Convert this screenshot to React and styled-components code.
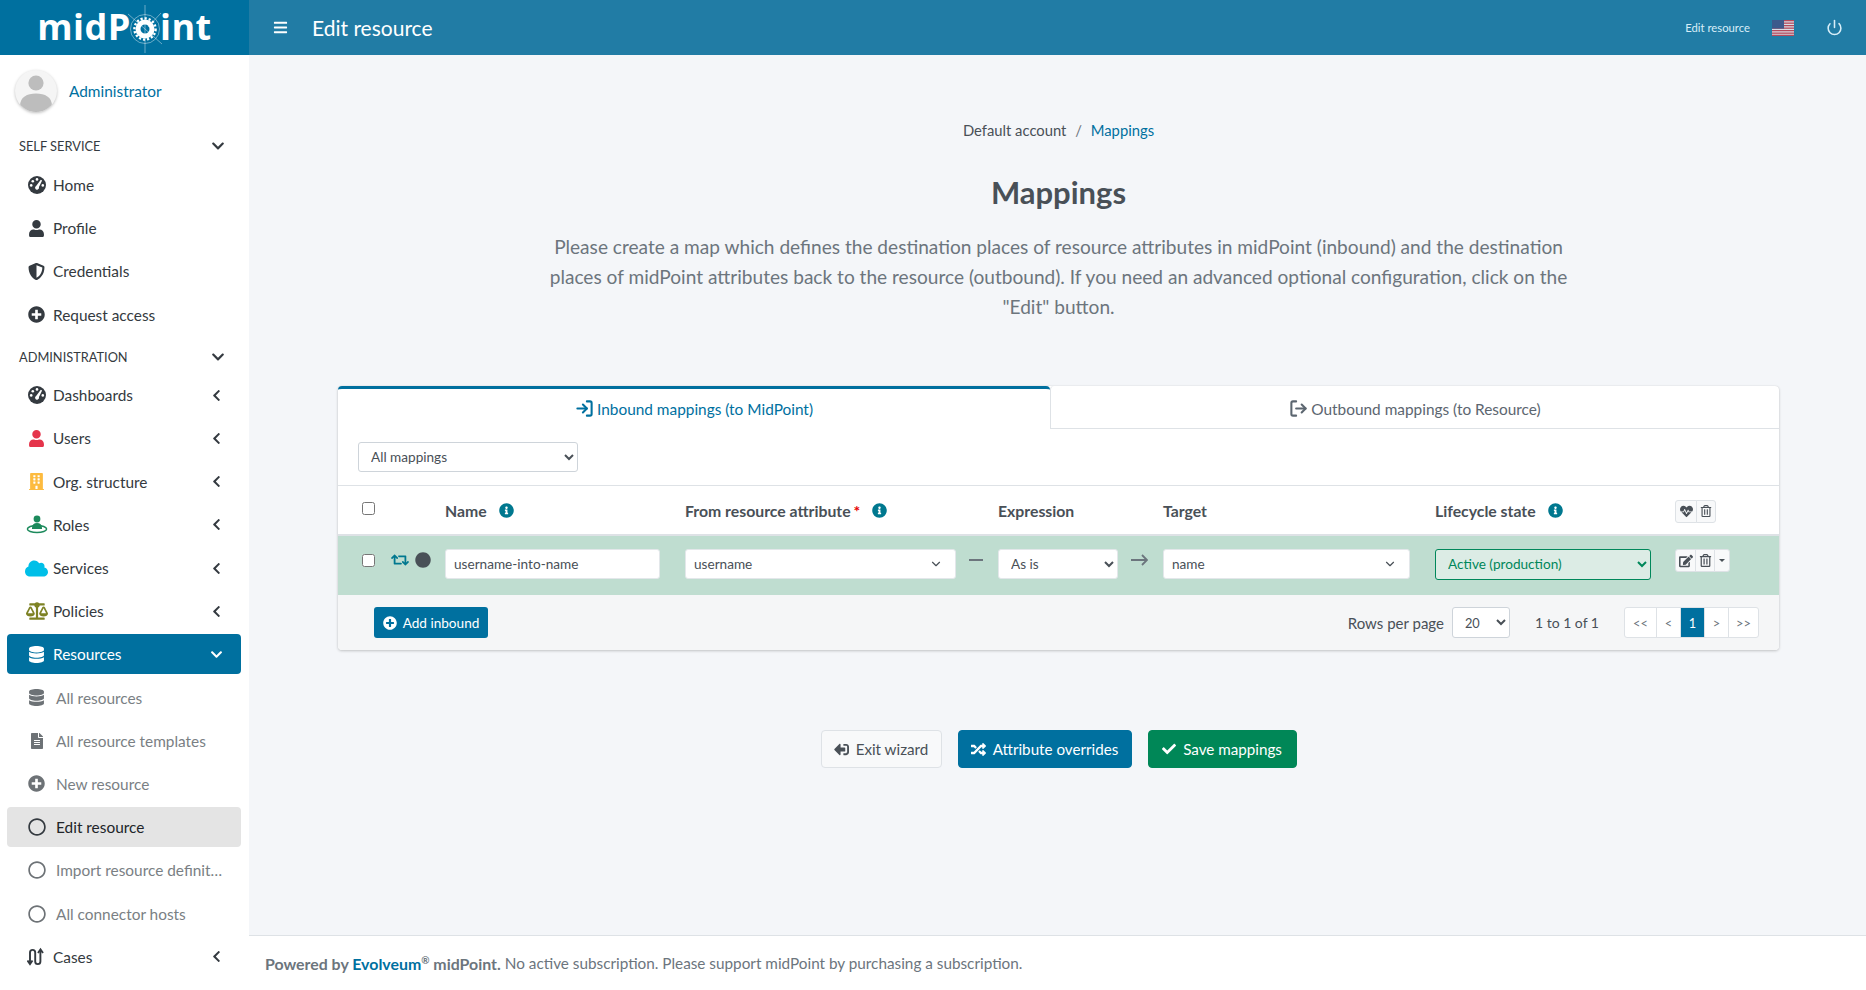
import styled, { createGlobalStyle } from "styled-components";
import {
  FaBalanceScale,
  FaBars,
  FaBuilding,
  FaCheck,
  FaChevronDown,
  FaChevronLeft,
  FaCircle,
  FaCloud,
  FaDatabase,
  FaEdit,
  FaFileAlt,
  FaHeartbeat,
  FaInfoCircle,
  FaPlusCircle,
  FaRandom,
  FaRegCircle,
  FaRegTrashAlt,
  FaRetweet,
  FaShieldAlt,
  FaSignOutAlt,
  FaUser,
} from "react-icons/fa";
import { ChevronDown, LogIn, LogOut, Power } from "lucide-react";

const FONT = `"Lato", "Noto Sans", sans-serif`;
const BLUE = "#00709f";

const GlobalStyle = createGlobalStyle`
  html, body {
    margin: 0;
    height: 100%;
    overflow: hidden;
    background: #f4f6f9;
    font-family: ${FONT};
    font-size: 15.4px;
    color: #495057;
  }
  * { box-sizing: border-box; }
  select, input { font-family: ${FONT}; }
`;

const GaugeIcon = () => (
  <svg width="18" height="18" viewBox="0 0 18 18">
    <circle cx="9" cy="9" r="9" fill="#343a40" />
    <g fill="#fff">
      <circle cx="9" cy="3.4" r="1.300" />
      <circle cx="4.800" cy="5.200" r="1.300" />
      <circle cx="3.200" cy="9.400" r="1.300" />
      <circle cx="14.800" cy="9.400" r="1.300" />
      <path d="M12.800 3.800l1.300.6-3.100 6.700a2 2 0 1 1-2.900-1.200z" />
    </g>
  </svg>
);

const RoleIcon = () => (
  <svg width="22" height="20" viewBox="0 0 22 20" fill="#1c8a5c">
    <circle cx="11" cy="4" r="3.400" />
    <path d="M6 13c0-3.400 2-5 5-5s5 1.600 5 5v1H6z" />
    <ellipse cx="11" cy="14" rx="9.600" ry="3.600" fill="none" stroke="#1c8a5c" strokeWidth="1.500" />
  </svg>
);

const CasesIcon = () => (
  <svg width="20" height="20" viewBox="0 0 20 20" fill="none" stroke="#343a40" strokeWidth="1.900">
    <path d="M3 17V5.500a2.600 2.600 0 0 1 5.200 0v9a2.600 2.600 0 0 0 5.200 0V3" />
    <path d="M0.500 13.500 3 17l2.500-3.500" />
    <path d="M11 6l2.500-3.500L16 6" />
  </svg>
);

const UsFlag = () => (
  <svg width="22" height="16" viewBox="0 0 22 16">
    <rect width="22" height="16" fill="#d8dde6" />
    {[0, 2.5, 5, 7.5, 10, 12.5].map((y) => (
      <rect key={y} y={y} width="22" height="1.300" fill="#b5495b" />
    ))}
    <rect y="14.700" width="22" height="1.300" fill="#b5495b" />
    <rect width="12" height="8.600" fill="#3c5a8c" />
  </svg>
);

const Avatar = () => (
  <AvatarCircle>
    <svg width="42" height="42" viewBox="0 0 42 42" fill="#bdbdbd">
      <circle cx="21" cy="13" r="7.600" />
      <path d="M5 36c0-9 7-12.500 16-12.500S37 27 37 36c-4 4-10 6-16 6S9 40 5 36z" />
    </svg>
  </AvatarCircle>
);

const LogoGear = () => (
  <GearSvg width="46" height="48" viewBox="0 0 46 48" fill="none" stroke="#fff">
    <path d="M23 0v48M6 9l34 30M39 8L26 22" strokeWidth="0.700" opacity="0.6" />
    <circle cx="23" cy="24" r="14.500" strokeWidth="0.700" opacity="0.6" />
    <circle cx="23" cy="24" r="10.600" strokeWidth="2.400" strokeDasharray="2.200 1.900" />
    <circle cx="23" cy="24" r="7" strokeWidth="5" />
  </GearSvg>
);

const selfService = [
  { label: "Home", icon: <GaugeIcon /> },
  { label: "Profile", icon: <FaUser size={17} color="#343a40" /> },
  { label: "Credentials", icon: <FaShieldAlt size={17} color="#343a40" /> },
  { label: "Request access", icon: <FaPlusCircle size={17} color="#343a40" /> },
];

const administration = [
  { label: "Dashboards", icon: <GaugeIcon />, more: true },
  { label: "Users", icon: <FaUser size={17} color="#e5344b" />, more: true },
  { label: "Org. structure", icon: <FaBuilding size={17} color="#fdbb3f" />, more: true },
  { label: "Roles", icon: <RoleIcon />, more: true },
  { label: "Services", icon: <FaCloud size={23} color="#00bfe8" />, more: true },
  { label: "Policies", icon: <FaBalanceScale size={22} color="#7d8224" />, more: true },
];

const resources = [
  { label: "All resources", icon: <FaDatabase size={17} color="#6d7276" /> },
  { label: "All resource templates", icon: <FaFileAlt size={16} color="#6d7276" /> },
  { label: "New resource", icon: <FaPlusCircle size={17} color="#6d7276" /> },
  { label: "Edit resource", icon: <FaRegCircle size={18} color="#343a40" />, selected: true },
  { label: "Import resource definit…", icon: <FaRegCircle size={18} color="#6d7276" /> },
  { label: "All connector hosts", icon: <FaRegCircle size={18} color="#6d7276" /> },
];

const NavItem = ({ item, sub }) => (
  <NavRow $sub={sub} $selected={item.selected}>
    <NavIcon>{item.icon}</NavIcon>
    <NavLabel $sub={sub}>{item.label}</NavLabel>
    {item.more && <FaChevronLeft size={13} color="#343a40" />}
  </NavRow>
);

const InfoIcon = () => (
  <InfoMark>
    <FaInfoCircle size={15} />
  </InfoMark>
);

const App = () => {
  return (
    <Page>
      <GlobalStyle />
      <TopBar>
        <Logo>
          <span>midP</span>
          <LogoGear />
          <span>int</span>
        </Logo>
        <TopBarBody>
          <FaBars size={15} />
          <TopTitle>Edit resource</TopTitle>
          <TopRight>
            <TopCrumb>Edit resource</TopCrumb>
            <UsFlag />
            <Power size={17} strokeWidth={2.2} />
          </TopRight>
        </TopBarBody>
      </TopBar>
      <Body>
        <Sidebar>
          <UserPanel>
            <Avatar />
            <UserName>Administrator</UserName>
          </UserPanel>
          <SectionLabel>
            SELF SERVICE
            <FaChevronDown size={14} color="#343a40" />
          </SectionLabel>
          {selfService.map((item) => (
            <NavItem key={item.label} item={item} />
          ))}
          <SectionLabel>
            ADMINISTRATION
            <FaChevronDown size={14} color="#343a40" />
          </SectionLabel>
          {administration.map((item) => (
            <NavItem key={item.label} item={item} />
          ))}
          <NavRow $active>
            <NavIcon>
              <FaDatabase size={17} />
            </NavIcon>
            <NavLabel>Resources</NavLabel>
            <FaChevronDown size={13} />
          </NavRow>
          {resources.map((item) => (
            <NavItem key={item.label} item={item} sub />
          ))}
          <NavItem item={{ label: "Cases", icon: <CasesIcon />, more: true }} />
        </Sidebar>
        <Main>
          <Content>
            <Breadcrumb>
              Default account <Slash>/</Slash> <CrumbLink>Mappings</CrumbLink>
            </Breadcrumb>
            <Title>Mappings</Title>
            <Lead>
              Please create a map which defines the destination places of resource attributes in
              midPoint (inbound) and the destination places of midPoint attributes back to the
              resource (outbound). If you need an advanced optional configuration, click on the
              "Edit" button.
            </Lead>
            <Card>
              <Tabs>
                <Tab $active>
                  <LogIn size={19} strokeWidth={2.6} />
                  Inbound mappings (to MidPoint)
                </Tab>
                <Tab>
                  <LogOut size={19} strokeWidth={2.6} />
                  Outbound mappings (to Resource)
                </Tab>
              </Tabs>
              <FilterRow>
                <FilterSelect defaultValue="all">
                  <option value="all">All mappings</option>
                </FilterSelect>
              </FilterRow>
              <HeadRow>
                <CheckCell>
                  <Check type="checkbox" />
                </CheckCell>
                <HeadCell>
                  Name <InfoIcon />
                </HeadCell>
                <HeadCell>
                  From resource attribute<Required>*</Required> <InfoIcon />
                </HeadCell>
                <HeadCell>Expression</HeadCell>
                <HeadCell>Target</HeadCell>
                <HeadCell>
                  Lifecycle state <InfoIcon />
                </HeadCell>
                <div>
                  <ActionGroup>
                    <ActionButton $w={22}>
                      <FaHeartbeat size={13} />
                    </ActionButton>
                    <ActionButton $w={20}>
                      <FaRegTrashAlt size={12} />
                    </ActionButton>
                  </ActionGroup>
                </div>
              </HeadRow>
              <DataRow>
                <CheckCell $raised>
                  <Check type="checkbox" />
                  <FaRetweet size={18} color="#00788f" />
                  <FaCircle size={16} color="#495057" />
                </CheckCell>
                <TextField readOnly value="username-into-name" $width={215} />
                <DashedCell>
                  <ComboBox $width={271}>
                    username
                    <ChevronDown size={14} />
                  </ComboBox>
                  <Dash />
                </DashedCell>
                <DashedCell>
                  <RowSelect $width={120} defaultValue="asis">
                    <option value="asis">As is</option>
                  </RowSelect>
                  <RowArrow>
                    <svg width="17" height="12" viewBox="0 0 17 12" fill="none" stroke="#6c757d" strokeWidth="1.800">
                      <path d="M0 6h16M11 1l5 5-5 5" />
                    </svg>
                  </RowArrow>
                </DashedCell>
                <ComboBox $width={247}>
                  name
                  <ChevronDown size={14} />
                </ComboBox>
                <LifecycleSelect defaultValue="active">
                  <option value="active">Active (production)</option>
                </LifecycleSelect>
                <div>
                  <ActionGroup $raised>
                    <ActionButton $w={21}>
                      <FaEdit size={14} />
                    </ActionButton>
                    <ActionButton $w={20}>
                      <FaRegTrashAlt size={13} />
                    </ActionButton>
                    <CaretButton $w={16} />
                  </ActionGroup>
                </div>
              </DataRow>
              <CardFooter>
                <AddButton>
                  <FaPlusCircle size={14} />
                  Add inbound
                </AddButton>
                <Paging>
                  <PagingText>Rows per page</PagingText>
                  <PageSizeSelect defaultValue="20">
                    <option value="20">20</option>
                  </PageSizeSelect>
                  <PagingCount>1 to 1 of 1</PagingCount>
                  <Pager>
                    <PagerItem $w={31}>&lt;&lt;</PagerItem>
                    <PagerItem $w={24}>&lt;</PagerItem>
                    <PagerItem $w={24} $active>
                      1
                    </PagerItem>
                    <PagerItem $w={24}>&gt;</PagerItem>
                    <PagerItem $w={30}>&gt;&gt;</PagerItem>
                  </Pager>
                </Paging>
              </CardFooter>
            </Card>
            <WizardButtons>
              <WizardButton $w={121}>
                <FlippedExit>
                  <FaSignOutAlt size={15} />
                </FlippedExit>
                Exit wizard
              </WizardButton>
              <WizardButton $w={174} $bg={BLUE} $fg="#fff">
                <FaRandom size={15} />
                Attribute overrides
              </WizardButton>
              <WizardButton $w={149} $bg="#008757" $fg="#fff">
                <FaCheck size={14} />
                Save mappings
              </WizardButton>
            </WizardButtons>
          </Content>
          <Footer>
            <b>
              Powered by <FooterLink>Evolveum</FooterLink>
              <sup>®</sup> midPoint.
            </b>{" "}
            No active subscription. Please support midPoint by purchasing a subscription.
          </Footer>
        </Main>
      </Body>
    </Page>
  );
};

const Page = styled.div`
  height: 100vh;
  display: flex;
  flex-direction: column;
`;

const TopBar = styled.header`
  height: 55px;
  flex: none;
  display: flex;
  color: #fff;
`;

const Logo = styled.div`
  width: 249px;
  background: ${BLUE};
  display: flex;
  align-items: center;
  justify-content: center;
  font-family: "Open Sans", sans-serif;
  font-weight: 700;
  font-size: 36px;
  letter-spacing: 0.5px;
  padding-bottom: 2px;
`;

const GearSvg = styled.svg`
  margin: 5px -8px 0 -9px;
`;

const TopBarBody = styled.div`
  flex: 1;
  background: #217ca5;
  display: flex;
  align-items: center;
  padding: 0 23px 0 24px;
`;

const TopTitle = styled.div`
  font-size: 21px;
  margin-left: 24px;
`;

const TopRight = styled.div`
  margin-left: auto;
  display: flex;
  align-items: center;
  gap: 22px;
  color: #d8eef8;

  svg:last-child {
    margin-left: 10px;
  }
`;

const TopCrumb = styled.span`
  font-size: 11.3px;
`;

const Body = styled.div`
  flex: 1;
  display: flex;
  min-height: 0;
`;

const Sidebar = styled.nav`
  width: 249px;
  flex: none;
  background: #fff;
  padding: 0 8px 0 7px;
  overflow: hidden;
`;

const UserPanel = styled.div`
  height: 72.5px;
  display: flex;
  align-items: center;
  gap: 12px;
  padding: 0 0 0 8px;
`;

const AvatarCircle = styled.div`
  width: 42px;
  height: 42px;
  border-radius: 50%;
  background: #f5f5f5;
  box-shadow: 0 1px 3px rgba(0, 0, 0, 0.25);
  overflow: hidden;
`;

const UserName = styled.a`
  color: ${BLUE};
  font-size: 15.4px;
`;

const SectionLabel = styled.div`
  height: 37.5px;
  display: flex;
  align-items: center;
  justify-content: space-between;
  padding: 0 16px 0 12px;
  font-size: 12.8px;
  color: #343a40;
`;

const NavRow = styled.a`
  height: 40px;
  margin-bottom: 3.2px;
  display: flex;
  align-items: center;
  padding: 0 ${(p) => (p.$sub ? "8px" : "18px")} 0 17px;
  border-radius: 4px;
  color: ${(p) => (p.$active ? "#fff" : p.$selected ? "#212529" : p.$sub ? "#7a7f84" : "#343a40")};
  background: ${(p) => (p.$active ? BLUE : p.$selected ? "#e4e4e4" : "transparent")};
`;

const NavIcon = styled.span`
  width: 25px;
  display: flex;
  justify-content: center;
  flex: none;
`;

const NavLabel = styled.span`
  flex: 1;
  margin-left: ${(p) => (p.$sub ? "7px" : "4px")};
  white-space: nowrap;
  font-size: 15.4px;
`;

const Main = styled.main`
  flex: 1;
  display: flex;
  flex-direction: column;
  min-width: 0;
`;

const Content = styled.div`
  flex: 1;
  padding: 63px 87px 0 89px;
  display: flex;
  flex-direction: column;
  align-items: center;
`;

const Breadcrumb = styled.div`
  line-height: 24px;
  font-size: 14.8px;
  color: #495057;
`;

const Slash = styled.span`
  color: #6c757d;
  margin: 0 5px;
`;

const CrumbLink = styled.a`
  color: ${BLUE};
`;

const Title = styled.h1`
  margin: 31px 0 0;
  font-size: 31px;
  line-height: 38px;
  font-weight: 700;
  color: #495057;
`;

const Lead = styled.p`
  margin: 21px 0 0;
  width: 1030px;
  text-align: center;
  font-size: 19.1px;
  line-height: 30px;
  color: #6c757d;
`;

const Card = styled.section`
  margin-top: 64px;
  width: 100%;
  background: #fff;
  border-radius: 4px;
  box-shadow: 0 0 1px rgba(0, 0, 0, 0.125), 0 1px 3px rgba(0, 0, 0, 0.2);
`;

const Tabs = styled.div`
  display: flex;
  height: 43px;
`;

const Tab = styled.div`
  width: ${(p) => (p.$active ? "712px" : "auto")};
  flex: ${(p) => (p.$active ? "none" : "1")};
  display: flex;
  align-items: center;
  justify-content: center;
  gap: 3px;
  font-size: 15.4px;
  color: ${(p) => (p.$active ? BLUE : "#5c6670")};
  padding: ${(p) => (p.$active ? "0 0 1px" : "3px 0 0")};
  border-top: ${(p) => (p.$active ? `3px solid ${BLUE}` : "none")};
  border-left: ${(p) => (p.$active ? "none" : "1px solid #dee2e6")};
  border-bottom: ${(p) => (p.$active ? "none" : "1px solid #dee2e6")};
  border-radius: 4px 4px 0 0;
`;

const FilterRow = styled.div`
  height: 57px;
  padding: 13px 20px 0;
  border-bottom: 1px solid #dee2e6;
`;

const FilterSelect = styled.select`
  display: block;
  width: 220px;
  height: 30px;
  padding: 0 8px;
  font-size: 13.6px;
  color: #495057;
  background: #fff;
  border: 1px solid #ced4da;
  border-radius: 3px;
`;

const COLUMNS = "107px 240px 313px 165px 272px 240px 1fr";

const HeadRow = styled.div`
  height: 50px;
  display: grid;
  grid-template-columns: ${COLUMNS};
  align-items: center;
  border-bottom: 2px solid #dee2e6;
`;

const CheckCell = styled.div`
  display: flex;
  align-items: center;
  gap: 6px;
  padding-left: 24px;
  margin-bottom: ${(p) => (p.$raised ? "8px" : "0")};
`;

const Check = styled.input`
  width: 13px;
  height: 13px;
  margin: 0 10px 0 0;
  &:only-child {
    margin-top: -3px;
  }
`;

const HeadCell = styled.div`
  font-size: 15.8px;
  font-weight: 700;
  color: #495057;
  display: flex;
  align-items: center;
`;

const Required = styled.span`
  color: #e60000;
  margin-left: 3px;
`;

const InfoMark = styled.span`
  color: #00788f;
  display: inline-flex;
  margin-left: 12px;
`;

const DataRow = styled.div`
  height: 59px;
  display: grid;
  grid-template-columns: ${COLUMNS};
  align-items: center;
  background: #bfddd0;
  padding-bottom: 3px;
`;

const TextField = styled.input`
  width: ${(p) => p.$width}px;
  height: 30px;
  padding: 0 8px;
  font-size: 13.6px;
  color: #495057;
  background: #fff;
  border: 1px solid #e3e7ea;
  border-radius: 3px;
  outline: none;
`;

const ComboBox = styled.div`
  width: ${(p) => p.$width}px;
  height: 30px;
  flex: none;
  padding: 0 12px 0 8px;
  display: flex;
  align-items: center;
  justify-content: space-between;
  font-size: 13.6px;
  color: #495057;
  background: #fff;
  border: 1px solid #e3e7ea;
  border-radius: 3px;
`;

const DashedCell = styled.div`
  display: flex;
  align-items: center;
`;

const Dash = styled.span`
  width: 14px;
  height: 2px;
  margin: 0 0 8px 13px;
  background: #6c757d;
`;

const RowSelect = styled.select`
  width: ${(p) => p.$width}px;
  height: 30px;
  padding: 0 8px;
  font-size: 13.6px;
  color: #495057;
  background: #fff;
  border: 1px solid #e3e7ea;
  border-radius: 3px;
`;

const RowArrow = styled.span`
  display: flex;
  margin: 0 0 8px 13px;
`;

const LifecycleSelect = styled.select`
  width: 216px;
  height: 31px;
  padding: 0 8px;
  font-size: 13.6px;
  color: #00875a;
  background: #dcece5;
  border: 1px solid #00875a;
  border-radius: 3px;
`;

const ActionGroup = styled.div`
  display: inline-flex;
  vertical-align: middle;
  margin-top: ${(p) => (p.$raised ? "0" : "2px")};
  margin-bottom: ${(p) => (p.$raised ? "7px" : "0")};
`;

const ActionButton = styled.button`
  width: ${(p) => p.$w}px;
  height: 23px;
  padding: 0;
  display: flex;
  align-items: center;
  justify-content: center;
  color: #495057;
  background: #f8f9fa;
  border: 1px solid #dee2e6;
  margin-left: -1px;
  &:first-child {
    border-radius: 3px 0 0 3px;
    margin-left: 0;
  }
  &:last-child {
    border-radius: 0 3px 3px 0;
  }
`;

const CaretButton = styled(ActionButton)`
  &::after {
    content: "";
    border-top: 3px solid #495057;
    border-left: 3px solid transparent;
    border-right: 3px solid transparent;
  }
`;

const CardFooter = styled.div`
  height: 55px;
  display: flex;
  align-items: center;
  justify-content: space-between;
  padding: 0 20px 0 36px;
  background: #f5f6f7;
  border-radius: 0 0 4px 4px;
`;

const AddButton = styled.button`
  width: 114px;
  height: 31px;
  display: flex;
  align-items: center;
  justify-content: center;
  gap: 6px;
  font-family: ${FONT};
  font-size: 13.6px;
  color: #fff;
  background: ${BLUE};
  border: none;
  border-radius: 3px;
`;

const Paging = styled.div`
  display: flex;
  align-items: center;
`;

const PagingText = styled.span`
  font-size: 15px;
  margin-right: 8px;
`;

const PageSizeSelect = styled.select`
  width: 58px;
  height: 31px;
  padding: 0 8px;
  font-size: 12.8px;
  color: #495057;
  background: #fff;
  border: 1px solid #ced4da;
  border-radius: 3px;
`;

const PagingCount = styled.span`
  font-size: 14px;
  margin: 0 25px;
`;

const Pager = styled.div`
  display: flex;
  height: 31px;
  border: 1px solid #dee2e6;
  border-radius: 3px;
  background: #fff;
`;

const PagerItem = styled.span`
  width: ${(p) => p.$w}px;
  display: flex;
  align-items: center;
  justify-content: center;
  font-size: 12.8px;
  color: ${(p) => (p.$active ? "#fff" : "#6c757d")};
  background: ${(p) => (p.$active ? BLUE : "transparent")};
  border-left: 1px solid #dee2e6;
  &:first-child {
    border-left: none;
  }
`;

const WizardButtons = styled.div`
  margin-top: 80px;
  display: flex;
  gap: 16px;
`;

const WizardButton = styled.button`
  width: ${(p) => p.$w}px;
  height: 38px;
  padding: 0;
  display: flex;
  align-items: center;
  justify-content: center;
  gap: 7px;
  font-family: ${FONT};
  font-size: 15.2px;
  color: ${(p) => p.$fg || "#495057"};
  background: ${(p) => p.$bg || "#f8f9fa"};
  border: 1px solid ${(p) => p.$bg || "#dee2e6"};
  border-radius: 4px;
`;

const FlippedExit = styled.span`
  display: flex;
  transform: scaleX(-1);
`;

const Footer = styled.footer`
  height: 55px;
  flex: none;
  display: flex;
  align-items: center;
  gap: 4px;
  padding-left: 16px;
  background: #fff;
  border-top: 1px solid #dee2e6;
  font-size: 15.3px;
  color: #6c757d;
  b {
    font-size: 15.9px;
  }
  sup {
    font-size: 10px;
    line-height: 0;
  }
`;

const FooterLink = styled.span`
  color: ${BLUE};
`;

export default App;
